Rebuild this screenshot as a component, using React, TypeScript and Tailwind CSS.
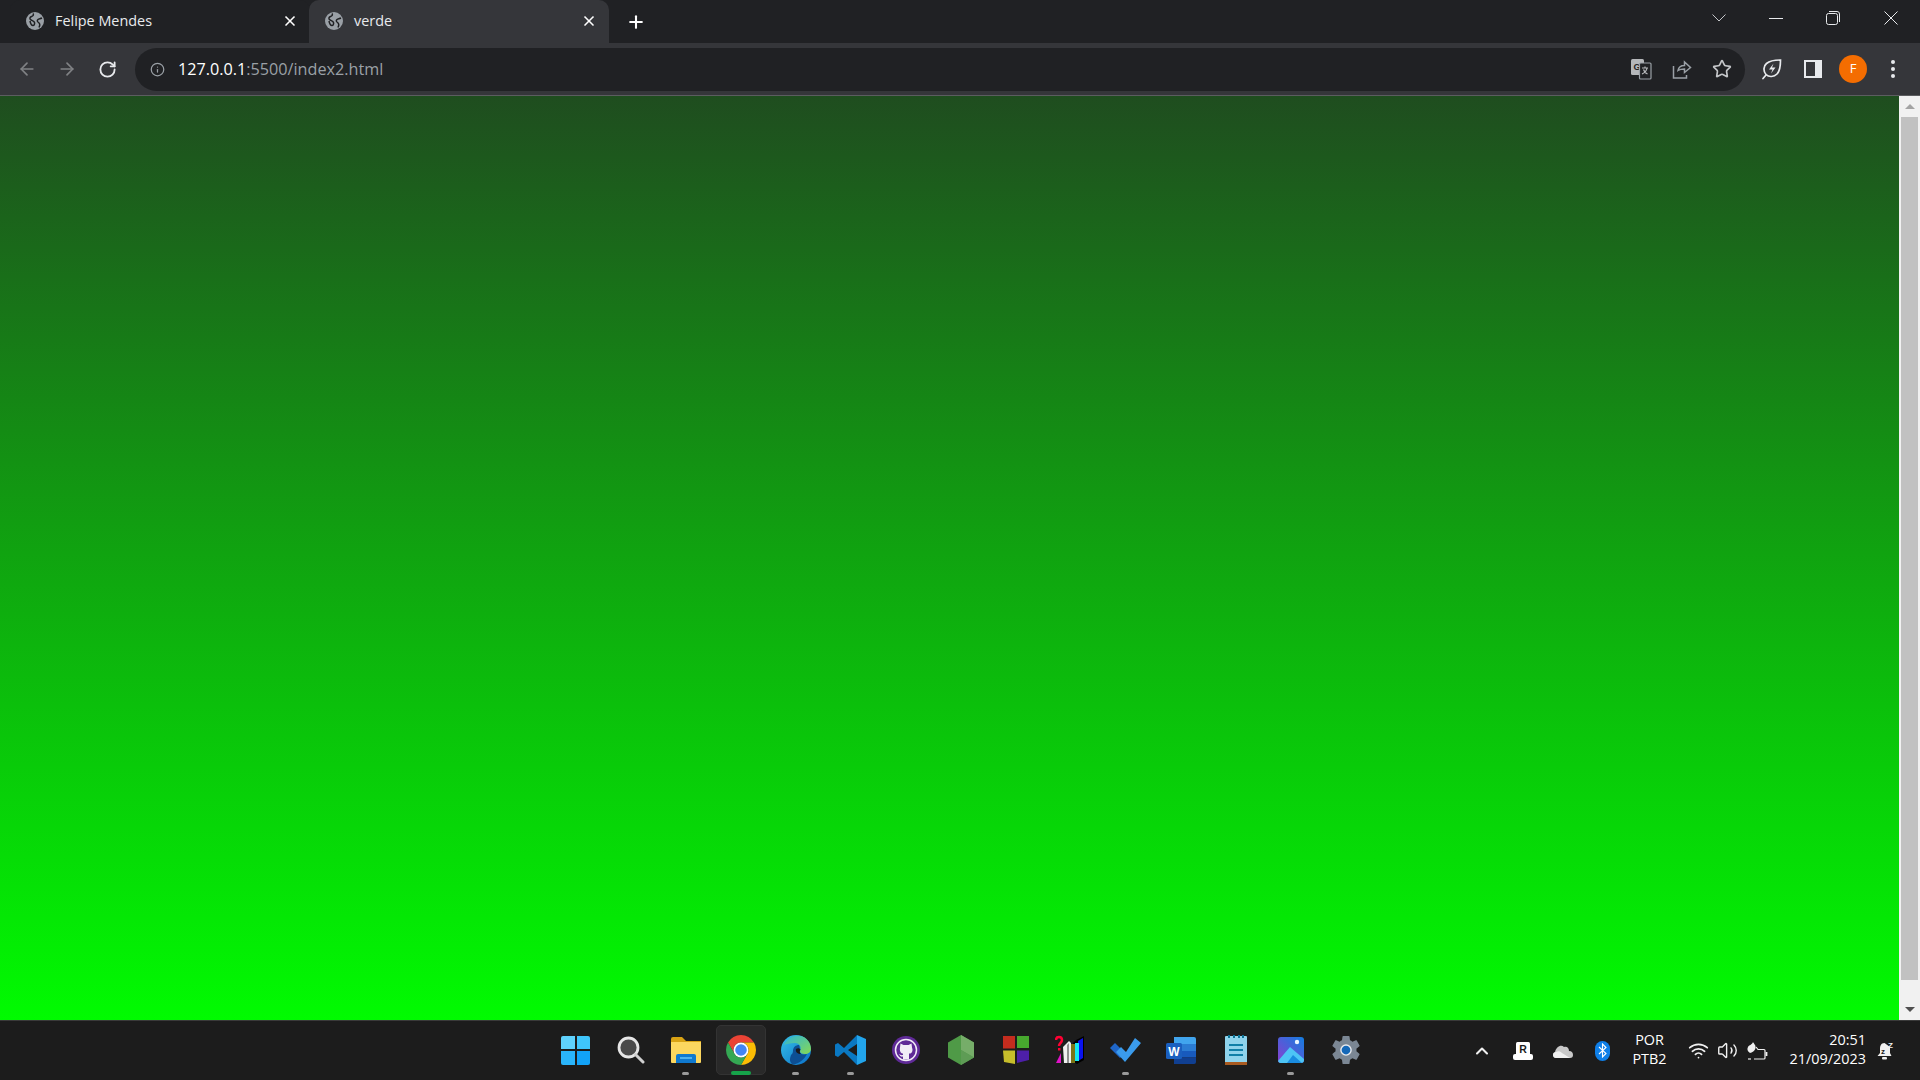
import React from "react";
import { X, Plus, ArrowLeft, ArrowRight, RotateCw, Star, Info, ChevronUp, Volume2, Wifi } from "lucide-react";

function Globe() {
  return (
    <svg width="18" height="18" viewBox="0 0 18 18" className="shrink-0">
      <circle cx="9" cy="9" r="9" fill="#9aa0a6" />
      <path d="M7 1.500c1 1.500 0 2.500-1.500 3S3 7 5 8s3 1 3.500 2.500-.5 3-1.500 3-2.500-2-3-4.500" fill="none" stroke="#202124" strokeWidth="1.500" />
      <path d="M16 6c-2 1-3 .5-4 1.500s-1 2 .5 3 1.500 3 .5 5" fill="none" stroke="#202124" strokeWidth="1.500" />
    </svg>
  );
}

function Tab({ title, active }: { title: string; active?: boolean }) {
  return (
    <div
      className={`flex items-center h-full w-[300px] shrink-0 pl-[16px] pr-[12px] pb-[1px] rounded-t-[10px] ${
        active ? "bg-[#35363a]" : "bg-[#202124]"
      }`}
    >
      <Globe />
      <span className="ml-[11px] text-[14.4px] text-[#e8eaed] flex-1 leading-none">{title}</span>
      <X size={16} strokeWidth={2.5} className="text-white" />
    </div>
  );
}

function Translate() {
  return (
    <svg width="22" height="22" viewBox="0 0 22 22">
      <rect x="1" y="1" width="13" height="16" rx="1.500" fill="#b5b7ba" />
      <text x="3.500" y="12" fontSize="9" fontWeight="700" fill="#202124" fontFamily="Liberation Sans">G</text>
      <rect x="9.500" y="5" width="11.500" height="16" rx="1" fill="#202124" stroke="#9aa0a6" strokeWidth="1.200" />
      <path d="M12 10h6M15 8.500v1.500M17 10c-.5 3-2.500 5-5 6M13.500 11.500c.5 2 2 3.500 4 4.500" fill="none" stroke="#b5b7ba" strokeWidth="1.200" />
    </svg>
  );
}

function ShareIcon() {
  return (
    <svg width="20" height="20" viewBox="0 0 20 20" fill="none" stroke="#9aa0a6" strokeWidth="1.500">
      <path d="M6 11.500c.5-3 3-5 6.500-5V3l6 5.500-6 5v-3.500c-2.500 0-5 .5-6.500 1.500Z" />
      <path d="M1.500 7v12h13v-3" />
    </svg>
  );
}

function Leaf() {
  return (
    <svg width="20" height="22" viewBox="0 0 20 22" fill="none" stroke="#e8eaed" strokeWidth="1.700">
      <path d="M4 16.500C1 13 1.500 8 4.500 5.500S13 2 18.500 2C18.500 8 18 13 15 16s-8 3.500-11 .5Z" />
      <path d="M1 20.500l3-3.500" strokeLinecap="round" />
      <path d="M11.500 5.500 7 11.500h3.500L9 15.500l4.500-6H10Z" fill="#e8eaed" stroke="none" />
    </svg>
  );
}

function SidePanel() {
  return (
    <div className="w-[18px] h-[18px] bg-[#e8eaed] flex pl-[2px] py-[2px]">
      <div className="w-[9px] h-full bg-[#35363a]" />
    </div>
  );
}

function WinControls() {
  return (
    <div className="ml-auto flex items-center h-full">
      <svg width="14" height="8" viewBox="0 0 14 8" fill="none" stroke="#c4c6c9" className="mb-[7px] mr-[43px]">
        <path d="M.5.5 7 7 13.500.5" />
      </svg>
      <div className="w-[14px] h-px bg-[#e8eaed] mb-[7px] mr-[43px]" />
      <svg width="14" height="14" viewBox="0 0 14 14" fill="none" stroke="#e8eaed" className="mb-[7px] mr-[44px]">
        <rect x=".5" y="2.500" width="11" height="11" rx="2" />
        <path d="M3 .5h8a2.500 2.500 0 0 1 2.500 2.500v8" />
      </svg>
      <svg width="14" height="14" viewBox="0 0 14 14" fill="none" stroke="#e8eaed" className="mb-[7px] mr-[22px]">
        <path d="M.5.5l13 13M13.500.5l-13 13" />
      </svg>
    </div>
  );
}

function BrowserChrome() {
  return (
    <>
      <div className="flex items-stretch h-[43px] bg-[#202124] shrink-0">
        <div className="w-[309px] shrink-0 pl-[10px]">
          <Tab title="Felipe Mendes" />
        </div>
        <Tab title="verde" active />
        <div className="flex items-center pl-[17px]">
          <Plus size={20} strokeWidth={2.500} className="text-white" />
        </div>
        <WinControls />
      </div>
      <div className="flex items-center h-[53px] bg-[#35363a] border-b border-[#5c5d60] shrink-0">
        <div className="flex items-center w-[135px] pl-[17px] gap-[20px] shrink-0">
          <ArrowLeft size={20} className="text-[#808285]" />
          <ArrowRight size={20} className="text-[#808285]" />
          <RotateCw size={19} strokeWidth={2.300} className="text-[#e8eaed] ml-[1px]" />
        </div>
        <div className="flex items-center w-[1610px] h-[43px] rounded-full bg-[#202124] pl-[15px] shrink-0">
          <Info size={15} className="text-[#9aa0a6]" />
          <span className="ml-[13px] text-[16.2px] leading-none text-white">
            127.0.0.1<span className="text-[#9aa0a6]">:5500/index2.html</span>
          </span>
          <div className="ml-auto flex items-center gap-[20px] pr-[12px]">
            <Translate />
            <ShareIcon />
            <Star size={20} strokeWidth={2} className="text-[#c4c6c9] mr-[1px]" />
          </div>
        </div>
        <div className="flex items-center pl-[17px]">
          <Leaf />
          <div className="ml-[22px]">
            <SidePanel />
          </div>
          <div className="ml-[17px] w-[28px] h-[28px] rounded-full bg-[#f46d01] flex items-center justify-center text-white text-[13px]">
            F
          </div>
          <div className="ml-[24px] flex flex-col gap-[3px]">
            <div className="w-[4px] h-[4px] rounded-full bg-[#e8eaed]" />
            <div className="w-[4px] h-[4px] rounded-full bg-[#e8eaed]" />
            <div className="w-[4px] h-[4px] rounded-full bg-[#e8eaed]" />
          </div>
        </div>
      </div>
    </>
  );
}

function Scrollbar() {
  return (
    <div className="w-[21px] bg-[#f1f1f1] flex flex-col items-center shrink-0">
      <div className="h-[21px] flex items-center justify-center">
        <div className="w-0 h-0 border-x-[5px] border-x-transparent border-b-[5px] border-b-[#a3a3a3]" />
      </div>
      <div className="w-[17px] flex-1 bg-[#c1c1c1] mb-[19px]" />
      <div className="h-[21px] flex items-center justify-center">
        <div className="w-0 h-0 border-x-[5px] border-x-transparent border-t-[5px] border-t-[#505050]" />
      </div>
    </div>
  );
}

const Chrome = () => (
  <svg width="30" height="30" viewBox="2 2 44 44">
    <path d="M24 13H43.050A22 22 0 0 0 4.950 13L14.470 29.500A11 11 0 0 1 24 13Z" fill="#ea4335" />
    <path d="M33.530 29.500 24 46A22 22 0 0 0 43.050 13H24A11 11 0 0 1 33.530 29.500Z" fill="#fbbc04" />
    <path d="M14.470 29.500 4.950 13A22 22 0 0 0 24 46L33.530 29.500A11 11 0 0 1 14.470 29.500Z" fill="#34a853" />
    <circle cx="24" cy="24" r="11" fill="#fff" />
    <circle cx="24" cy="24" r="8.500" fill="#4285f4" />
  </svg>
);

const Start = () => (
  <div className="grid grid-cols-2 gap-[2px] w-[29px] h-[29px]">
    <div className="bg-[#5fd2fd] rounded-tl-[2px]" />
    <div className="bg-[#3fc6fc] rounded-tr-[2px]" />
    <div className="bg-[#2ab5fb] rounded-bl-[2px]" />
    <div className="bg-[#12a3f8] rounded-br-[2px]" />
  </div>
);

const Search = () => (
  <svg width="28" height="28" viewBox="0 0 28 28" fill="none">
    <circle cx="11.500" cy="11.500" r="9.500" fill="#4a4a4a" stroke="#e6e6e6" strokeWidth="2.800" />
    <path d="M18.500 18.500 26 26" stroke="#d0d0d0" strokeWidth="3" strokeLinecap="round" />
  </svg>
);

const Explorer = () => (
  <svg width="30" height="28" viewBox="0 0 30 28">
    <path d="M0 3a2 2 0 0 1 2-2h9l4 4h15v4H0Z" fill="#d9a314" />
    <path d="M0 6h30v20a1 1 0 0 1-1 1H1a1 1 0 0 1-1-1Z" fill="#fcd75f" />
    <path d="M5 27v-7a2 2 0 0 1 2-2h16a2 2 0 0 1 2 2v7Z" fill="#0f79d0" />
    <rect x="9" y="21" width="12" height="2" fill="#4db1f0" />
  </svg>
);

const Edge = () => (
  <svg width="30" height="30" viewBox="0 0 30 30">
    <defs>
      <linearGradient id="edgeA" x1="0" y1="0" x2="1" y2="1">
        <stop offset="0" stopColor="#36c0e8" />
        <stop offset="1" stopColor="#0a6fc8" />
      </linearGradient>
      <linearGradient id="edgeB" x1="0" y1="0" x2="1" y2="1">
        <stop offset="0" stopColor="#2fb5d8" />
        <stop offset="1" stopColor="#86d953" />
      </linearGradient>
    </defs>
    <circle cx="15" cy="15" r="15" fill="url(#edgeA)" />
    <path d="M3 10C6 3 13 0 19 1c7 1 11 7 11 13 0 3-3 5-6 5-3 0-5-1-5-3 2-3 0-8-5-8-5 0-9 1-11 2Z" fill="url(#edgeB)" />
    <path d="M12 16c0-4 3-6 6-6 1 2 1 4 0 6 0 3 4 4 8 3-3 6-9 11-15 10-3-3-2-6-1-9 1-1 2-2 2-4Z" fill="#0d4f94" />
    <path d="M15 14c1.500-1 3.500-1 4.500.5-1 1.500-1 3 .5 4.500-3 0-6-2-5-5Z" fill="#1b1b1b" />
  </svg>
);

const VSCode = () => (
  <svg width="31" height="30" viewBox="0 0 31 30">
    <path d="M22 0 31 4V26L22 30 22 21V9Z" fill="#22a5ec" />
    <path d="M22 0 9 13 3 8 0 9.500V20.500L3 22 9 17 22 30V21L13 15 22 9Z" fill="#0a78c2" />
  </svg>
);

const GithubIcon = () => (
  <svg width="28" height="28" viewBox="0 0 28 28">
    <circle cx="14" cy="14" r="14" fill="#5f2a97" />
    <circle cx="14" cy="14" r="10.500" fill="none" stroke="#f1edf6" strokeWidth="1.500" />
    <path d="M8.500 7.500l3 1.500h5l3-1.500.5 4c1 2 .5 5-1.500 6H17v6h-6v-3c-2 .5-3-.5-4-2.500 1 .5 2 1.500 4 1v-1.500H10c-2-1-2.500-4-2-6Z" fill="#f1edf6" />
  </svg>
);

const Node = () => (
  <svg width="26" height="30" viewBox="0 0 26 30">
    <path d="M13 0 26 7.500V22.500L13 30 0 22.500V7.500Z" fill="#4f9a47" />
    <path d="M13 0 26 7.500V22.500L13 15Z" fill="#76ad69" />
    <path d="M13 15 26 22.500 13 30Z" fill="#5e9c55" />
  </svg>
);

const Colors = () => (
  <svg width="28" height="30" viewBox="0 0 28 30">
    <path d="M1 1H13V13.500H1Z" fill="#c42c1e" />
    <path d="M15 1H27V13H15Z" fill="#47a82e" />
    <path d="M1 15.500H13V29L2 27Z" fill="#c6bd2b" />
    <path d="M15 15.500H27V25L15 28Z" fill="#4d1fa8" />
  </svg>
);

const Books = () => (
  <svg width="31" height="30" viewBox="0 0 31 30">
    <path d="M21 5 29 1V25L22 29 18 27V8Z" fill="#000" />
    <path d="M23 6 28 3V23L23 26Z" fill="#0a12f0" />
    <path d="M20 8H24V26H20Z" fill="#12e8f2" />
    <path d="M16 9H20V28H16Z" fill="#7a7414" />
    <path d="M8 12 14 6 16 8V28H9Z" fill="#f0f0f0" />
    <path d="M12 10 14 8V28H12Z" fill="#909090" />
    <path d="M1 5C1 1 7 1 7 5 7 8 4 8 4 11" fill="none" stroke="#ff0033" strokeWidth="2.500" />
    <rect x="3" y="13" width="2.500" height="2.500" fill="#ff0033" />
    <path d="M1 28 6 18V28Z" fill="#e012c8" />
  </svg>
);

const Todo = () => (
  <svg width="31" height="24" viewBox="0 0 31 24">
    <path d="M0 10 5 5 15 15 10 20Z" fill="#1f66c8" />
    <path d="M6 14 11 9 16 14 25 0 31 5 15 24Z" fill="#3a9bec" />
  </svg>
);

const Word = () => (
  <svg width="30" height="28" viewBox="0 0 30 28">
    <path d="M8 1H28a2 2 0 0 1 2 2V8H8Z" fill="#41a5ee" />
    <rect x="8" y="8" width="22" height="7" fill="#2b7cd3" />
    <rect x="8" y="15" width="22" height="6.500" fill="#185abd" />
    <path d="M8 21.500H30V26a2 2 0 0 1-2 2H8Z" fill="#103f91" />
    <rect x="0" y="7" width="16" height="16" rx="1.500" fill="#1a5fbf" />
    <text x="8" y="19.500" textAnchor="middle" fontSize="12" fontWeight="700" fill="#fff" fontFamily="Liberation Sans">W</text>
  </svg>
);

const Notepad = () => (
  <svg width="22" height="30" viewBox="0 0 22 30">
    <rect x="0" y="1" width="22" height="28" rx="1" fill="#8fd3ec" />
    <rect x="0" y="27" width="22" height="3" fill="#a85a20" />
    <path d="M3 0h2v3H3ZM8 0h2v3H8ZM13 0h2v3h-2ZM17 0h2v3h-2Z" fill="#0c7396" />
    <path d="M4 9h14v2H4ZM4 14h14v2H4ZM4 19h14v2H4Z" fill="#0f7fa8" />
  </svg>
);

const Photos = () => (
  <svg width="26" height="26" viewBox="0 0 26 26">
    <defs>
      <linearGradient id="photosBg" x1="0" y1="1" x2="1" y2="0">
        <stop offset="0" stopColor="#8a3fd0" />
        <stop offset="1" stopColor="#127ee0" />
      </linearGradient>
    </defs>
    <rect width="26" height="26" rx="3" fill="url(#photosBg)" />
    <circle cx="19" cy="5" r="2.200" fill="#e8f4ff" />
    <path d="M0 24 12 10 26 22V23a3 3 0 0 1-3 3H3a3 3 0 0 1-3-2Z" fill="#4dc4f5" />
    <path d="M9 26 15 18 24 26Z" fill="#1a8ce0" />
  </svg>
);

const Gear = () => (
  <svg width="28" height="28" viewBox="2.400 2.400 19.200 19.200">
    <path
      d="M19.140,12.940c0.040-0.300,0.060-0.610,0.060-0.940c0-0.320-0.020-0.640-0.070-0.940l2.030-1.580c0.180-0.140,0.230-0.410,0.120-0.610l-1.920-3.320c-0.120-0.220-0.370-0.290-0.590-0.220l-2.390,0.960c-0.500-0.380-1.030-0.700-1.620-0.940L14.400,2.810c-0.040-0.240-0.240-0.410-0.480-0.410h-3.840c-0.240,0-0.430,0.170-0.470,0.410L9.250,5.350C8.660,5.590,8.120,5.920,7.630,6.290L5.240,5.330c-0.220-0.080-0.470,0-0.590,0.220L2.740,8.870C2.620,9.080,2.660,9.340,2.860,9.480l2.030,1.580C4.840,11.360,4.800,11.690,4.800,12s0.020,0.640,0.070,0.940l-2.030,1.580c-0.180,0.140-0.230,0.410-0.120,0.610l1.920,3.320c0.120,0.220,0.370,0.290,0.590,0.220l2.390-0.960c0.500,0.380,1.030,0.700,1.620,0.940l0.360,2.540c0.050,0.240,0.240,0.410,0.480,0.410h3.840c0.240,0,0.440-0.170,0.470-0.410l0.360-2.540c0.590-0.240,1.130-0.560,1.620-0.940l2.390,0.960c0.220,0.080,0.470,0,0.590-0.220l1.920-3.320c0.120-0.220,0.070-0.470-0.120-0.610L19.140,12.940z"
      fill="#7b8794"
    />
    <circle cx="12" cy="12" r="4" fill="#e8eaed" />
    <circle cx="12" cy="12" r="3" fill="#1568b8" />
  </svg>
);

const apps: { icon: React.ReactNode; dot?: "gray" | "green"; active?: boolean }[] = [
  { icon: <Start /> },
  { icon: <Search /> },
  { icon: <Explorer />, dot: "gray" },
  { icon: <Chrome />, dot: "green", active: true },
  { icon: <Edge />, dot: "gray" },
  { icon: <VSCode />, dot: "gray" },
  { icon: <GithubIcon /> },
  { icon: <Node /> },
  { icon: <Colors /> },
  { icon: <Books /> },
  { icon: <Todo />, dot: "gray" },
  { icon: <Word /> },
  { icon: <Notepad /> },
  { icon: <Photos />, dot: "gray" },
  { icon: <Gear /> },
];

function TrayR() {
  return (
    <svg width="20" height="18" viewBox="0 0 20 18">
      <rect x="3" y="0" width="14" height="13" rx="1.500" fill="#fff" />
      <rect x="0" y="12" width="20" height="6" rx="2" fill="#fff" />
      <text x="10" y="10.500" textAnchor="middle" fontSize="10.500" fontWeight="700" fill="#1c1c1c" fontFamily="Liberation Sans">R</text>
    </svg>
  );
}

function TrayCloud() {
  return (
    <svg width="20" height="14" viewBox="0 0 20 14">
      <path d="M3 14a3 3 0 0 1-1-5.800C3 3 8 0 11 3c3-1 5 1 5 4 3 0 4 2 4 4s-1 3-3 3Z" fill="#c8c8c8" />
      <path d="M3 14a3 3 0 0 1 0-6c2-1 4-1 6 1l8 5Z" fill="#f0f0f0" />
    </svg>
  );
}

function TrayBluetooth() {
  return (
    <div className="w-[15px] h-[20px] rounded-full bg-[#0f7fe8] flex items-center justify-center">
      <svg width="9" height="15" viewBox="0 0 9 15" fill="none" stroke="#fff" strokeWidth="1.100">
        <path d="M1 4l7 6.500L4.500 14V1L8 4.500 1 11" />
      </svg>
    </div>
  );
}

function TrayBattery() {
  return (
    <svg width="21" height="18" viewBox="0 0 21 18" fill="none" stroke="#f0f0f0" strokeWidth="1.200">
      <path d="M7 17H17a1 1 0 0 0 1-1V8.500a1 1 0 0 0-1-1H11L9 5" />
      <path d="M1 17H4" />
      <path d="M19.500 10v4" strokeWidth="1.800" />
      <path d="M6 0c1 2 3 3 2.500 6S5 10.500 3 11C0 9 0 7 1 5s4-2 5-5Z" fill="#f0f0f0" stroke="none" />
    </svg>
  );
}

function TrayBell() {
  return (
    <svg width="18" height="20" viewBox="0 0 18 20">
      <path d="M7.500 2C4 2 3 5 3 8v4l-2.500 3h14L13 12V6" fill="#f0f0f0" />
      <rect x="5" y="16" width="5" height="2.500" rx="1" fill="#f0f0f0" />
      <text x="6" y="13" textAnchor="middle" fontSize="8" fontWeight="700" fill="#1c1c1c" fontFamily="Liberation Sans">z</text>
      <text x="13.500" y="6.500" textAnchor="middle" fontSize="8" fontWeight="700" fill="#f0f0f0" fontFamily="Liberation Sans">Z</text>
    </svg>
  );
}

function Taskbar() {
  return (
    <div className="flex items-center h-[60px] bg-[#1c1c1c] border-t border-[#3a3a3a] shrink-0">
      <div className="flex items-center pl-[548px] pb-[1px]">
        {apps.map((app, i) => (
          <div key={i} className="relative w-[55px] h-[50px] flex items-center justify-center">
            {app.active && (
              <div className="absolute inset-y-0 left-[2.500px] right-[2.500px] rounded-[5px] bg-[#292929] border border-[#333333]" />
            )}
            <div className="relative flex items-center justify-center">{app.icon}</div>
            {app.dot === "gray" && (
              <div className="absolute bottom-[0px] left-[24px] w-[7px] h-[3px] rounded-full bg-[#9a9a9a]" />
            )}
            {app.dot === "green" && (
              <div className="absolute bottom-[0px] left-[18px] w-[20px] h-[4px] rounded-full bg-[#16a34a]" />
            )}
          </div>
        ))}
      </div>
      <div className="ml-auto flex items-center text-white text-[14.4px] leading-[19px]">
        <ChevronUp size={20} strokeWidth={2.500} className="text-[#f0f0f0] mr-[21px]" />
        <TrayR />
        <div className="ml-[20px]">
          <TrayCloud />
        </div>
        <div className="ml-[22px]">
          <TrayBluetooth />
        </div>
        <div className="w-[55px] ml-[12px] mr-[3px] text-center pb-[3px]">
          <div>POR</div>
          <div>PTB2</div>
        </div>
        <Wifi size={21} strokeWidth={2} className="ml-[8px] text-[#f0f0f0]" />
        <Volume2 size={21} strokeWidth={1.600} className="ml-[8px] text-[#f0f0f0]" />
        <div className="ml-[9px]">
          <TrayBattery />
        </div>
        <div className="w-[90px] ml-[8px] text-right pb-[3px]">
          <div>20:51</div>
          <div>21/09/2023</div>
        </div>
        <div className="ml-[11px] mr-[25px]">
          <TrayBell />
        </div>
      </div>
    </div>
  );
}

export default function App() {
  return (
    <div className="flex flex-col h-screen overflow-hidden font-['Open_Sans','Noto_Sans',sans-serif]">
      <BrowserChrome />
      <div className="flex flex-1 min-h-0">
        <div className="flex-1 bg-[linear-gradient(180deg,#1f4d1f,#00ff00_102.2%)]" />
        <Scrollbar />
      </div>
      <Taskbar />
    </div>
  );
}
